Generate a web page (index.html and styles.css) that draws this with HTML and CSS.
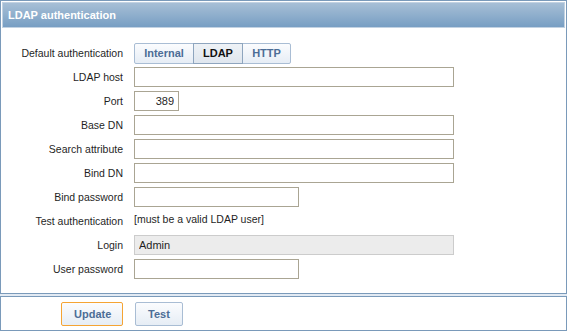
FILE: index.html
```html
<!DOCTYPE html>
<html lang="en">
<head>
    <meta charset="UTF-8">
    <title>LDAP authentication</title>
    <link rel="stylesheet" href="styles.css">
</head>
<body>
    <div class="page">
        <div class="panel">
            <div class="panel-header">LDAP authentication</div>
            <div class="form-grid">
                <label>Default authentication</label>
                <div class="seg">
                    <span class="seg-btn internal">Internal</span>
                    <span class="seg-btn ldap active">LDAP</span>
                    <span class="seg-btn http">HTTP</span>
                </div>

                <label>LDAP host</label>
                <div><input type="text" class="wide"></div>

                <label>Port</label>
                <div><input type="text" class="port" value="389"></div>

                <label>Base DN</label>
                <div><input type="text" class="wide"></div>

                <label>Search attribute</label>
                <div><input type="text" class="wide"></div>

                <label>Bind DN</label>
                <div><input type="text" class="wide"></div>

                <label>Bind password</label>
                <div><input type="password" class="mid"></div>

                <label>Test authentication</label>
                <div class="note">[must be a valid LDAP user]</div>

                <label>Login</label>
                <div><input type="text" class="wide readonly" value="Admin" readonly></div>

                <label>User password</label>
                <div><input type="password" class="mid"></div>
            </div>
        </div>
        <div class="panel footer">
            <div class="footer-left"><button class="btn focus">Update</button></div>
            <div><button class="btn">Test</button></div>
        </div>
    </div>
</body>
</html>
```

FILE: styles.css
```css
html, body {
    margin: 0;
    padding: 0;
    background: #fff;
}
body {
    font-family: "Liberation Sans", Arial, sans-serif;
    font-size: 10.5px;
    color: #1f1f1f;
}
.page {
    width: 567px;
    height: 331px;
    background: #e2eaf3;
    box-sizing: border-box;
}
.panel {
    background: #fff;
    border: 1px solid #7a9aba;
    box-sizing: border-box;
}
.panel-header {
    margin: 1px 1px 0 1px;
    height: 26px;
    box-sizing: border-box;
    border: 1px solid #c2d2e2;
    background: linear-gradient(#a7bfd6, #779ec3);
    color: #fff;
    font-weight: bold;
    font-size: 11px;
    line-height: 24px;
    padding-left: 5px;
}
.form-grid {
    display: grid;
    grid-template-columns: 122px 1fr;
    column-gap: 11px;
    row-gap: 4px;
    grid-auto-rows: 20px;
    padding: 15px 0 14px 0;
}
.form-grid label {
    text-align: right;
    line-height: 21px;
}
.seg {
    display: flex;
    height: 21px;
}
.seg-btn {
    display: block;
    box-sizing: border-box;
    height: 21px;
    line-height: 19px;
    border: 1px solid #a9bdd4;
    margin-left: -1px;
    background: linear-gradient(#fbfcfe, #e6edf5);
    color: #4c6d96;
    font-weight: bold;
    text-align: center;
    font-size: 11px;
}
.seg-btn.internal {
    margin-left: 0;
    width: 60px;
    border-radius: 2px 0 0 2px;
}
.seg-btn.ldap {
    width: 50px;
}
.seg-btn.http {
    width: 49px;
    border-radius: 0 2px 2px 0;
}
.seg-btn.active {
    border-color: #8ea5be;
    background: linear-gradient(#eef2f6, #dfe6ee);
    color: #111;
    position: relative;
}
input {
    display: block;
    box-sizing: border-box;
    height: 20px;
    border: 1px solid #aaa593;
    font-family: "Liberation Sans", Arial, sans-serif;
    font-size: 11px;
    padding: 0 4px;
    margin: 0;
    background: #fff;
    color: #1f1f1f;
}
input.wide {
    width: 320px;
}
input.mid {
    width: 165px;
}
input.port {
    width: 45px;
    text-align: right;
}
input.readonly {
    background: #ececec;
    border-color: #cccccc;
}
.note {
    line-height: 17px;
}
.footer {
    margin-top: 2px;
    height: 35px;
    display: grid;
    grid-template-columns: 122px 1fr;
    column-gap: 12px;
    align-items: center;
}
.footer-left {
    text-align: right;
}
.btn {
    height: 24px;
    box-sizing: border-box;
    border: 1px solid #a9bdd4;
    border-radius: 2px;
    background: linear-gradient(#fbfcfe, #e6edf5);
    color: #4c6d96;
    font-family: "Liberation Sans", Arial, sans-serif;
    font-weight: bold;
    font-size: 11px;
    padding: 0 12px;
}
.btn.focus {
    border-color: #f5a433;
    width: 62px;
}
```
